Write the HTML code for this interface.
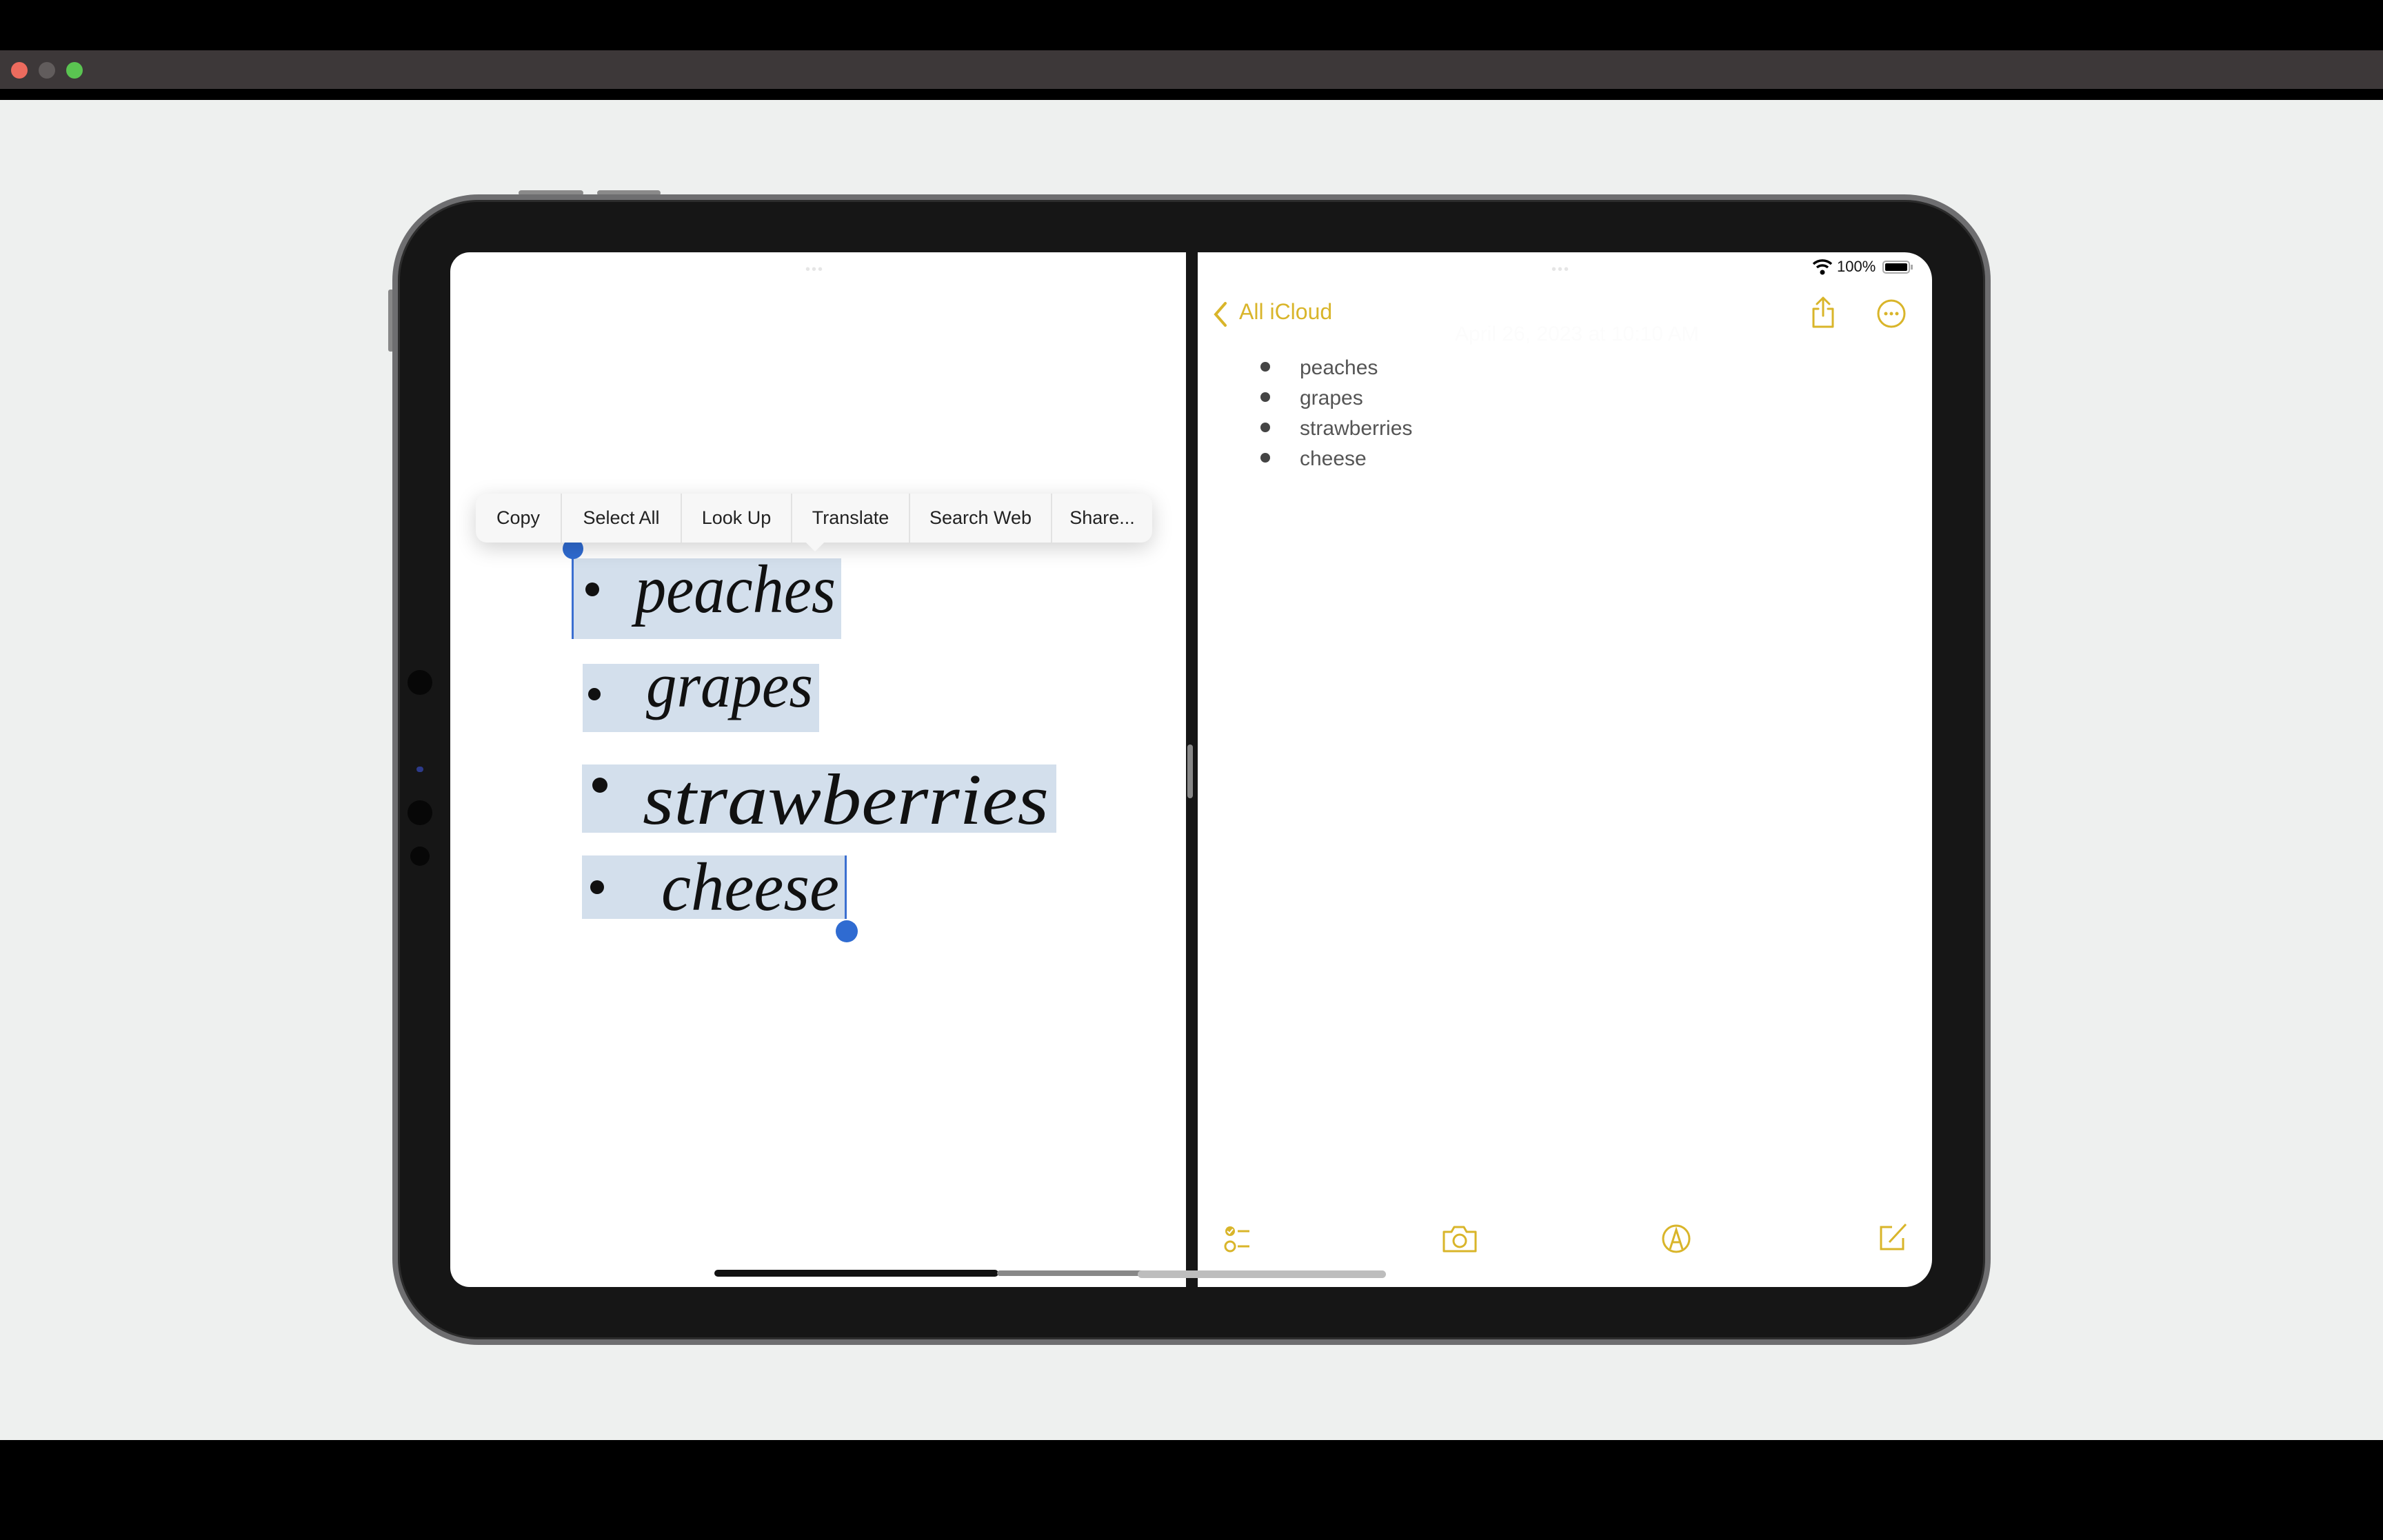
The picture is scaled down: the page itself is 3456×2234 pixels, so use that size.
<!DOCTYPE html>
<html><head><meta charset="utf-8"><style>
*{margin:0;padding:0;box-sizing:border-box}
body{width:3456px;height:2234px;background:#000;position:relative;overflow:hidden;font-family:"Liberation Sans",sans-serif}
.a{position:absolute}
</style></head><body>
<div class="a" style="left:0;top:73px;width:3456px;height:56px;background:#3d3839"></div>
<div class="a" style="left:16px;top:90px;width:24px;height:24px;border-radius:50%;background:#ec6b5e"></div>
<div class="a" style="left:56px;top:90px;width:24px;height:24px;border-radius:50%;background:#615c5c"></div>
<div class="a" style="left:96px;top:90px;width:24px;height:24px;border-radius:50%;background:#5ac451"></div>
<div class="a" style="left:0;top:145px;width:3456px;height:1944px;background:#eef0ef"></div>

<div class="a" style="left:752px;top:276px;width:94px;height:8px;border-radius:4px;background:#8a8a8a"></div>
<div class="a" style="left:866px;top:276px;width:92px;height:8px;border-radius:4px;background:#8a8a8a"></div>
<div class="a" style="left:563px;top:420px;width:8px;height:90px;border-radius:3px;background:#888"></div>
<div class="a" style="left:569px;top:282px;width:2318px;height:1669px;border-radius:125px;background:#161616;border:8px solid #6e6e70;box-shadow:inset 0 0 0 3px #2c2c2c"></div>
<div class="a" style="left:591px;top:972px;width:36px;height:36px;border-radius:50%;background:#070707"></div>
<div class="a" style="left:591px;top:1161px;width:36px;height:36px;border-radius:50%;background:#070707"></div>
<div class="a" style="left:595px;top:1228px;width:28px;height:28px;border-radius:50%;background:#070707"></div>
<div class="a" style="left:604px;top:1112px;width:10px;height:8px;border-radius:4px;background:#2c3a8a"></div>

<div class="a" style="left:653px;top:366px;width:1067px;height:1501px;background:#fff;border-radius:28px 0 0 28px"></div>
<div class="a" style="left:1737px;top:366px;width:1065px;height:1501px;background:#fff;border-radius:0 40px 40px 0"></div>
<div class="a" style="left:1722px;top:1080px;width:8px;height:78px;border-radius:4px;background:#888"></div>

<div class="a" style="left:1168px;top:380px;color:#e6e6e6;font-size:20px;letter-spacing:2px">•••</div>
<div class="a" style="left:2250px;top:380px;color:#e6e6e6;font-size:20px;letter-spacing:2px">•••</div>

<!-- highlights -->
<div class="a" style="left:829px;top:810px;width:391px;height:117px;background:#d3dfec;border-left:3px solid #3b6fd0"></div>
<div class="a" style="left:845px;top:963px;width:343px;height:99px;background:#d3dfec"></div>
<div class="a" style="left:844px;top:1109px;width:688px;height:99px;background:#d3dfec"></div>
<div class="a" style="left:844px;top:1241px;width:384px;height:92px;background:#d3dfec;border-right:3px solid #3b6fd0"></div>
<div class="a" style="left:816px;top:781px;width:30px;height:30px;border-radius:50%;background:#2f6bd1"></div>
<div class="a" style="left:1212px;top:1335px;width:32px;height:32px;border-radius:50%;background:#2f6bd1"></div>

<svg class="a" style="left:0;top:0" width="3456" height="2234">
<g fill="#111">
<circle cx="859" cy="855" r="10"/><circle cx="862" cy="1007" r="9"/><circle cx="870" cy="1139" r="11"/><circle cx="866" cy="1287" r="10"/>
<g font-family="Liberation Serif, serif" font-style="italic">
<text x="921" y="888" font-size="100" textLength="291" lengthAdjust="spacingAndGlyphs">peaches</text>
<text x="937" y="1025" font-size="92" textLength="242" lengthAdjust="spacingAndGlyphs">grapes</text>
<text x="932" y="1195" font-size="105" textLength="589" lengthAdjust="spacingAndGlyphs">strawberries</text>
<text x="959" y="1320" font-size="100" textLength="258" lengthAdjust="spacingAndGlyphs">cheese</text>
</g></g>
</svg>

<!-- menu -->
<div class="a" style="left:690px;top:716px;width:981px;height:71px;background:#f7f7f7;border-radius:16px;box-shadow:0 8px 30px rgba(0,0,0,.18);font-size:27px;color:#222">
  <div class="a" style="left:0;top:0;width:123px;height:71px;line-height:71px;text-align:center">Copy</div>
  <div class="a" style="left:123px;top:0;width:174px;height:71px;line-height:71px;text-align:center;border-left:2px solid #e2e2e2">Select All</div>
  <div class="a" style="left:297px;top:0;width:160px;height:71px;line-height:71px;text-align:center;border-left:2px solid #e2e2e2">Look Up</div>
  <div class="a" style="left:457px;top:0;width:171px;height:71px;line-height:71px;text-align:center;border-left:2px solid #e2e2e2">Translate</div>
  <div class="a" style="left:628px;top:0;width:206px;height:71px;line-height:71px;text-align:center;border-left:2px solid #e2e2e2">Search Web</div>
  <div class="a" style="left:834px;top:0;width:147px;height:71px;line-height:71px;text-align:center;border-left:2px solid #e2e2e2">Share...</div>
</div>
<div class="a" style="left:1172px;top:776px;width:20px;height:20px;background:#f7f7f7;transform:rotate(45deg)"></div>

<div class="a" style="left:1036px;top:1842px;width:412px;height:10px;border-radius:5px;background:#111"></div>
<div class="a" style="left:1446px;top:1843px;width:218px;height:8px;border-radius:4px;background:#888"></div>
<div class="a" style="left:1650px;top:1843px;width:360px;height:11px;border-radius:6px;background:#bdbdbd"></div>

<svg class="a" style="left:2628px;top:374px" width="30" height="26" viewBox="0 0 30 26"><path d="M2 9 A19 19 0 0 1 28 9" stroke="#000" stroke-width="3.5" fill="none"/><path d="M7 14 A12 12 0 0 1 23 14" stroke="#000" stroke-width="3.5" fill="none"/><circle cx="15" cy="21" r="3.5" fill="#000"/></svg>
<div class="a" style="left:2664px;top:374px;font-size:22px;color:#111">100%</div>
<div class="a" style="left:2730px;top:378px;width:40px;height:19px;border:2px solid #aaa;border-radius:5px;padding:2px"><div style="width:100%;height:100%;background:#000;border-radius:2px"></div></div>
<div class="a" style="left:2771px;top:384px;width:3px;height:7px;background:#aaa"></div>

<svg class="a" style="left:1758px;top:436px" width="24" height="40"><path d="M19 4 L5 20 L19 36" stroke="#d9b52a" stroke-width="4" fill="none" stroke-linecap="round"/></svg>
<div class="a" style="left:1797px;top:434px;font-size:32px;color:#d9b52a">All iCloud</div>
<svg class="a" style="left:2622px;top:428px" width="44" height="50"><path d="M15 20 H8 V46 H36 V20 H29 M22 30 V5 M13 13 L22 4 L31 13" stroke="#d9b52a" stroke-width="3" fill="none" stroke-linecap="round" stroke-linejoin="round"/></svg>
<svg class="a" style="left:2720px;top:432px" width="46" height="46"><circle cx="23" cy="23" r="19" stroke="#d9b52a" stroke-width="3" fill="none"/><circle cx="15" cy="23" r="2.5" fill="#d9b52a"/><circle cx="23" cy="23" r="2.5" fill="#d9b52a"/><circle cx="31" cy="23" r="2.5" fill="#d9b52a"/></svg>
<div class="a" style="left:2110px;top:468px;font-size:30px;color:#fcfcfc">April 26, 2023 at 10:10 AM</div>

<div class="a" style="left:1828px;top:525px;width:14px;height:14px;border-radius:50%;background:#444"></div>
<div class="a" style="left:1828px;top:569px;width:14px;height:14px;border-radius:50%;background:#444"></div>
<div class="a" style="left:1828px;top:613px;width:14px;height:14px;border-radius:50%;background:#444"></div>
<div class="a" style="left:1828px;top:657px;width:14px;height:14px;border-radius:50%;background:#444"></div>
<div class="a" style="left:1885px;top:512px;font-size:30px;color:#555;line-height:44px">peaches<br>grapes<br>strawberries<br>cheese</div>

<svg class="a" style="left:1770px;top:1775px" width="60" height="45"><circle cx="14" cy="11" r="7" fill="#d9b52a"/><path d="M10 11 l3 3 l5 -6" stroke="#fff" stroke-width="2" fill="none"/><circle cx="14" cy="33" r="7" stroke="#d9b52a" stroke-width="3" fill="none"/><path d="M25 11 H42 M25 33 H42" stroke="#d9b52a" stroke-width="3"/></svg>
<svg class="a" style="left:2090px;top:1775px" width="54" height="44"><path d="M4 12 H15 L19 5 H33 L37 12 H50 V40 H4 Z" stroke="#d9b52a" stroke-width="3" fill="none" stroke-linejoin="round"/><circle cx="27" cy="25" r="9" stroke="#d9b52a" stroke-width="3" fill="none"/></svg>
<svg class="a" style="left:2408px;top:1774px" width="46" height="46"><circle cx="23" cy="23" r="19" stroke="#d9b52a" stroke-width="3" fill="none"/><path d="M14 38 L23 10 L32 38 M18 28 H28" stroke="#d9b52a" stroke-width="3" fill="none"/></svg>
<svg class="a" style="left:2722px;top:1772px" width="46" height="46"><path d="M22 8 H6 V40 H38 V24" stroke="#d9b52a" stroke-width="3" fill="none"/><path d="M18 30 L42 4" stroke="#d9b52a" stroke-width="3"/></svg>
</body></html>
